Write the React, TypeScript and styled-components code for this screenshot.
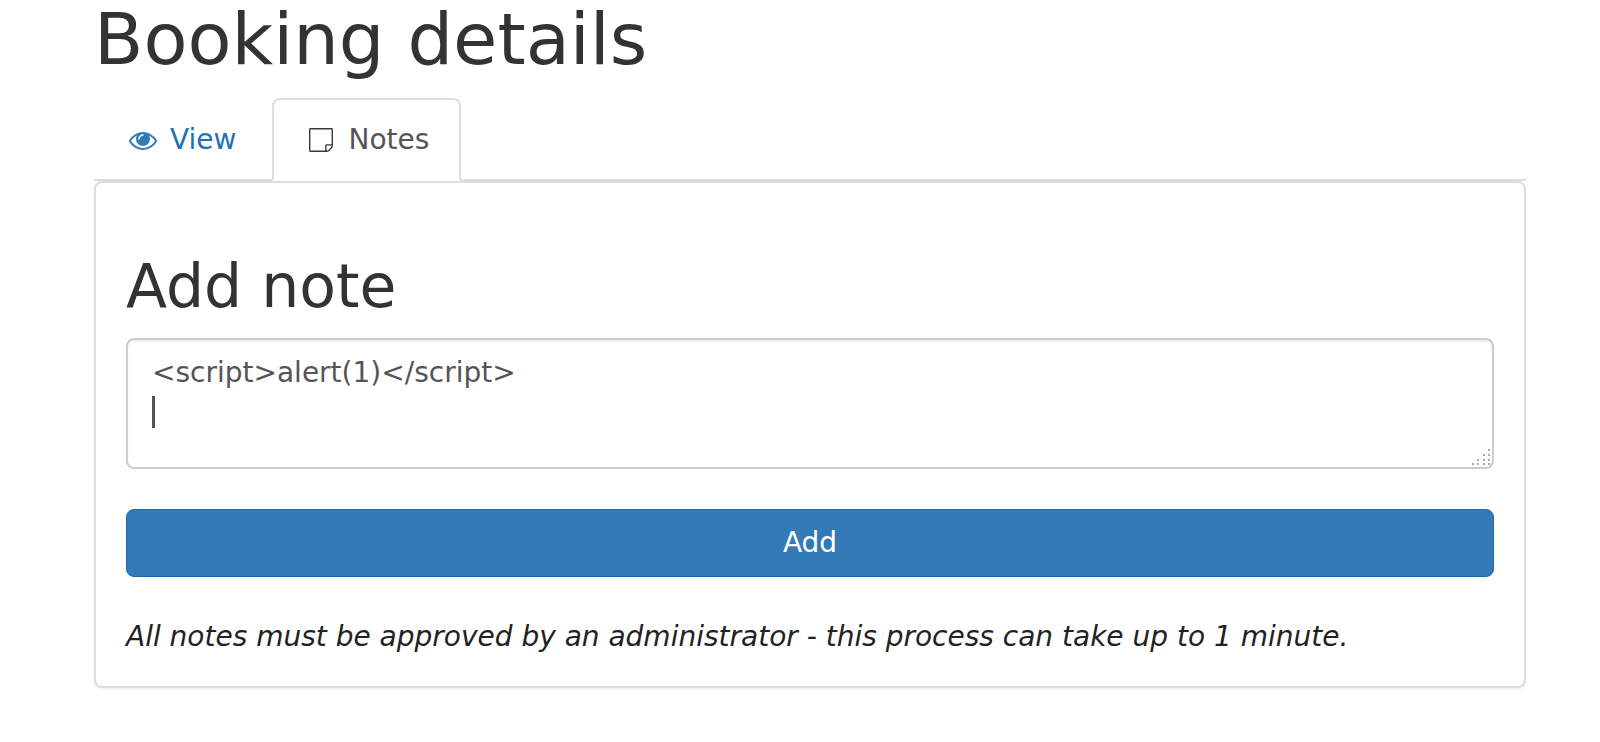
import React, { useState } from 'react';
import styled, { createGlobalStyle, css } from 'styled-components';

const GlobalStyle = createGlobalStyle`
  * { box-sizing: border-box; }
  body {
    margin: 0;
    background: #fff;
    color: #333;
    font-family: "DejaVu Sans", sans-serif;
    font-size: 28px;
    line-height: 40px;
  }
`;

const Page = styled.main`
  padding: 0 74px 52px 94px;
`;

const PageTitle = styled.h1`
  margin: 0 0 20px;
  font-size: 72px;
  font-weight: 400;
  line-height: 78px;
`;

const Tabs = styled.nav`
  display: flex;
  gap: 4px;
  border-bottom: 2px solid #ddd;
`;

const Tab = styled.a<{ $active?: boolean }>`
  display: flex;
  align-items: center;
  gap: 13px;
  height: 83px;
  margin-bottom: -2px;
  padding: 0 30px 0 33px;
  border: 2px solid transparent;
  border-radius: 8px 8px 0 0;
  color: #1f72b5;
  text-decoration: none;
  ${(p) =>
    p.$active &&
    css`
      border-color: #ddd;
      border-bottom-color: #fff;
      background: #fff;
      color: #555;
    `}
`;

const TabIcon = styled.svg`
  width: 28px;
  height: 28px;
  flex: none;
`;

const Panel = styled.section`
  padding: 71px 30px 29px;
  border: 2px solid #ddd;
  border-radius: 8px;
  box-shadow: 0 2px 2px rgba(0, 0, 0, 0.05);
`;

const Heading = styled.h2`
  margin: 0 0 20px;
  font-size: 60px;
  font-weight: 400;
  line-height: 64px;
`;

const NoteField = styled.div`
  position: relative;
`;

const NoteBox = styled.textarea`
  display: block;
  width: 100%;
  height: 131px;
  padding: 13px 24px;
  border: 2px solid #ccc;
  border-radius: 8px;
  outline: none;
  box-shadow: inset 0 2px 2px rgba(0, 0, 0, 0.075);
  color: #555;
  caret-color: transparent;
  font: inherit;
  resize: none;
`;

const Caret = styled.span`
  position: absolute;
  top: 58px;
  left: 26px;
  width: 3px;
  height: 32px;
  background: #555;
  pointer-events: none;
`;

const Grip = styled.svg`
  position: absolute;
  right: 2px;
  bottom: 2px;
  width: 22px;
  height: 18px;
  fill: #aaa;
  pointer-events: none;
`;

const AddButton = styled.button`
  display: block;
  width: 100%;
  height: 68px;
  margin: 40px 0;
  border: 1px solid #1f69a6;
  border-radius: 8px;
  background: #337ab7;
  color: #fff;
  font: inherit;
`;

const Hint = styled.em`
  display: block;
  color: #222;
`;

const EyeIcon = () => (
  <TabIcon viewBox="0 0 1792 1792" fill="#337ab7" aria-hidden="true">
    <path d="M1664 960q-152-236-381-353 61 104 61 225 0 185-131.500 316.500t-316.500 131.500-316.500-131.500-131.500-316.500q0-121 61-225-229 117-381 353 133 205 333.500 326.500t434.500 121.500 434.500-121.500 333.500-326.500zM944 576q0-20-14-34t-34-14q-125 0-214.500 89.500t-89.500 214.500q0 20 14 34t34 14 34-14 14-34q0-86 61-147t147-61q20 0 34-14t14-34zM1792 960q0 34-20 69-140 230-376.500 368.500t-499.500 138.500-499.500-139-376.500-368q-20-35-20-69t20-69q140-229 376.500-368t499.500-139 499.500 139 376.500 368q20 35 20 69z" />
  </TabIcon>
);

const NoteIcon = () => (
  <TabIcon viewBox="0 0 28 28" fill="none" stroke="#3a3a3a" strokeWidth="1.4" aria-hidden="true">
    <path d="M3.4 2.7H24.6Q25.300 2.700 25.300 3.400V19.500Q25.300 21 24.300 22L21.800 24.400Q20.800 25.300 19.500 25.300H3.400Q2.700 25.300 2.700 24.600V3.400Q2.700 2.700 3.400 2.700Z" />
    <path d="M18.900 25V19.600Q18.900 18.900 19.600 18.900H25" />
  </TabIcon>
);

const GRIP_DOTS = [
  [19, 1],
  [14, 6], [19, 6],
  [8, 11], [14, 11], [19, 11],
  [3, 15], [8, 15], [14, 15], [19, 15],
];

export default function App() {
  const [note, setNote] = useState('<script>alert(1)</script>\n');
  return (
    <>
      <GlobalStyle />
      <Page>
        <PageTitle>Booking details</PageTitle>
        <Tabs>
          <Tab href="#view"><EyeIcon />View</Tab>
          <Tab href="#notes" aria-current="page" $active><NoteIcon />Notes</Tab>
        </Tabs>
        <Panel>
          <Heading id="add-note">Add note</Heading>
          <NoteField>
            <NoteBox aria-labelledby="add-note" value={note} onChange={(e) => setNote(e.target.value)} />
            <Caret />
            <Grip viewBox="0 0 22 18" aria-hidden="true">
              {GRIP_DOTS.map(([x, y]) => (
                <rect key={`${x}-${y}`} x={x - 1} y={y - 1} width="2" height="2" />
              ))}
            </Grip>
          </NoteField>
          <AddButton type="button">Add</AddButton>
          <Hint>All notes must be approved by an administrator - this process can take up to 1 minute.</Hint>
        </Panel>
      </Page>
    </>
  );
}
